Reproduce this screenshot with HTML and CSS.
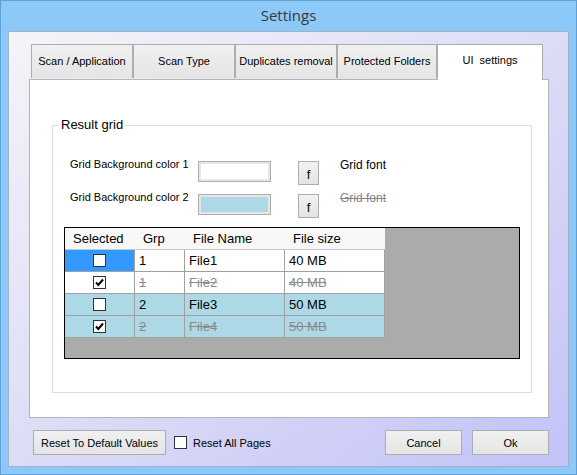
FILE: index.html
```html
<!DOCTYPE html>
<html lang="en">
<head>
  <meta charset="UTF-8" />
  <title>Settings</title>
  <link rel="stylesheet" href="styles.css">
</head>
<body>

  <div class="window">
    <div class="titlebar">Settings</div>

    <div class="client">
      <!-- Tabs -->
      <div class="tabs">
        <div class="tab">Scan / Application</div>
        <div class="tab">Scan Type</div>
        <div class="tab">Duplicates removal</div>
        <div class="tab tab-narrow">Protected Folders</div>
        <div class="tab active">UI&nbsp; settings</div>
      </div>

      <div class="panel">
        <div class="group">
          <span class="group-title">Result grid</span>

          <div class="setting-row">
            <span class="setting-label">Grid Background color 1</span>
            <span class="swatch"></span>
            <button class="font-btn">f</button>
            <span class="font-sample">Grid font</span>
          </div>
          <div class="setting-row">
            <span class="setting-label">Grid Background color 2</span>
            <span class="swatch blue"></span>
            <button class="font-btn">f</button>
            <span class="font-sample struck">Grid font</span>
          </div>

          <!-- Preview grid -->
          <div class="grid-view">
            <div class="grid-table">
              <div class="gh">Selected</div>
              <div class="gh">Grp</div>
              <div class="gh">File Name</div>
              <div class="gh">File size</div>

              <div class="gc check-cell selected"><span class="chk"></span></div>
              <div class="gc">1</div>
              <div class="gc">File1</div>
              <div class="gc">40 MB</div>

              <div class="gc check-cell"><span class="chk"><svg viewBox="0 0 11 11" width="11" height="11"><path d="M2 5.5 L4.3 8 L9 2.5" fill="none" stroke="#000" stroke-width="2"/></svg></span></div>
              <div class="gc struck">1</div>
              <div class="gc struck">File2</div>
              <div class="gc struck">40 MB</div>

              <div class="gc check-cell alt"><span class="chk"></span></div>
              <div class="gc alt">2</div>
              <div class="gc alt">File3</div>
              <div class="gc alt">50 MB</div>

              <div class="gc check-cell alt"><span class="chk"><svg viewBox="0 0 11 11" width="11" height="11"><path d="M2 5.5 L4.3 8 L9 2.5" fill="none" stroke="#000" stroke-width="2"/></svg></span></div>
              <div class="gc alt struck">2</div>
              <div class="gc alt struck">File4</div>
              <div class="gc alt struck">50 MB</div>
            </div>
          </div>
        </div>
      </div>

      <!-- Footer -->
      <div class="footer">
        <button class="btn btn-reset">Reset To Default Values</button>
        <label class="reset-all"><span class="box"></span>Reset All Pages</label>
        <div class="spacer"></div>
        <button class="btn">Cancel</button>
        <button class="btn">Ok</button>
      </div>
    </div>
  </div>

</body>
</html>
```

FILE: styles.css
```css
/* -- Reset & Base -- */
* { box-sizing: border-box; margin: 0; padding: 0; }
body {
  font-family: 'Liberation Sans', Arial, sans-serif;
  font-size: 11px;
  color: #000;
  background: #8cc8f8;
  width: 577px;
  height: 475px;
  overflow: hidden;
}
button { font-family: inherit; cursor: pointer; }

/* -- Window frame -- */
.window {
  width: 577px;
  height: 475px;
  background: #8cc8f8;
  border: 1px solid #5f9fd6;
  padding: 0 7px;
}
.titlebar {
  height: 30px;
  line-height: 29px;
  text-align: center;
  font-family: 'Open Sans', sans-serif;
  font-size: 15px;
  color: #3a3a3a;
}
.client {
  height: 436px;
  border: 1px solid #a4b2c6;
  background: linear-gradient(to bottom right, #f4f4f8 0%, #dcdcf6 50%, #c2c2f8 100%);
  padding: 11px 20px 0 20px;
}

/* -- Tabs -- */
.tabs {
  display: flex;
  align-items: flex-end;
  margin-left: 2px;
  height: 36px;
  position: relative;
  z-index: 1;
}
.tab {
  width: 102px;
  height: 34px;
  border: 1px solid #adadad;
  border-bottom: none;
  background: linear-gradient(#f0f0f0, #e5e5e5);
  display: flex;
  align-items: center;
  justify-content: center;
  padding-bottom: 1px;
  margin-bottom: 1px;
}
.tab-narrow { width: 100px; }
.tab.active {
  width: 106px;
  height: 36px;
  background: #fff;
  margin-bottom: -1px;
  padding-bottom: 6px;
}

/* -- Panel -- */
.panel {
  width: 520px;
  height: 339px;
  background: #fff;
  border: 1px solid #b4b4b4;
  padding: 45px 0 0 22px;
}

/* -- Group box -- */
.group {
  position: relative;
  width: 480px;
  height: 268px;
  border: 1px solid #dcdcdc;
  padding: 35px 0 0 17px;
}
.group-title {
  position: absolute;
  top: -9px;
  left: 6px;
  padding: 0 2px;
  background: #fff;
  font-size: 13px;
  line-height: 16px;
}

.setting-row {
  display: flex;
  align-items: flex-start;
  height: 24px;
  margin-bottom: 9px;
}
.setting-label {
  width: 128px;
  line-height: 13px;
  margin-top: -3px;
}
.swatch {
  width: 73px;
  height: 21px;
  border: 1px solid #adadad;
  background: #fff;
  box-shadow: inset 0 0 0 2px #e6e6e6;
}
.swatch.blue { background: #add8e6; }
.font-btn {
  width: 21px;
  height: 24px;
  margin-left: 27px;
  border: 1px solid #adadad;
  background: linear-gradient(#f2f2f2, #e4e4e4);
  font-size: 13px;
  padding-top: 3px;
  color: #000;
}
.font-sample {
  margin-left: 21px;
  font-size: 12px;
  line-height: 13px;
  margin-top: -2px;
}
.font-sample.struck { color: #888; text-decoration: line-through; }

/* -- Grid preview -- */
.grid-view {
  width: 456px;
  height: 132px;
  margin-left: -6px;
  border: 1px solid #000;
  background: #ababab;
}
.grid-table {
  display: grid;
  grid-template-columns: 70px 50px 100px 100px;
  grid-auto-rows: 22px;
  width: 320px;
}
.gh {
  background: #f8f8f8;
  font-size: 13px;
  line-height: 22px;
  padding-left: 8px;
  border-bottom: 1px solid #c8c8c8;
}
.gc {
  background: #fff;
  font-size: 13px;
  line-height: 21px;
  padding-left: 4px;
  border-right: 1px solid #a0a0a0;
  border-bottom: 1px solid #a0a0a0;
}
.gc.alt { background: #add8e6; }
.gc.selected { background: #3399ff; }
.gc.struck { color: #8a8a8a; text-decoration: line-through; }
.check-cell {
  display: flex;
  align-items: center;
  justify-content: center;
  padding: 0;
}
.chk {
  width: 13px;
  height: 13px;
  border: 1px solid #333;
  background: #fff;
  display: flex;
  align-items: center;
  justify-content: center;
}

/* -- Footer -- */
.footer {
  display: flex;
  align-items: center;
  margin-top: 12px;
  width: 520px;
  height: 25px;
}
.btn {
  height: 25px;
  width: 77px;
  border: 1px solid #adadad;
  background: linear-gradient(#f0f0f0, #e5e5e5);
  font-size: 11px;
  color: #000;
}
.btn + .btn { margin-left: 10px; }
.btn-reset { width: 133px; margin-left: 4px; }
.reset-all {
  display: flex;
  align-items: center;
  margin-left: 8px;
  font-size: 11px;
}
.reset-all .box {
  width: 13px;
  height: 13px;
  border: 1px solid #333;
  background: #fff;
  margin-right: 6px;
}
.spacer { flex: 1; }
```
